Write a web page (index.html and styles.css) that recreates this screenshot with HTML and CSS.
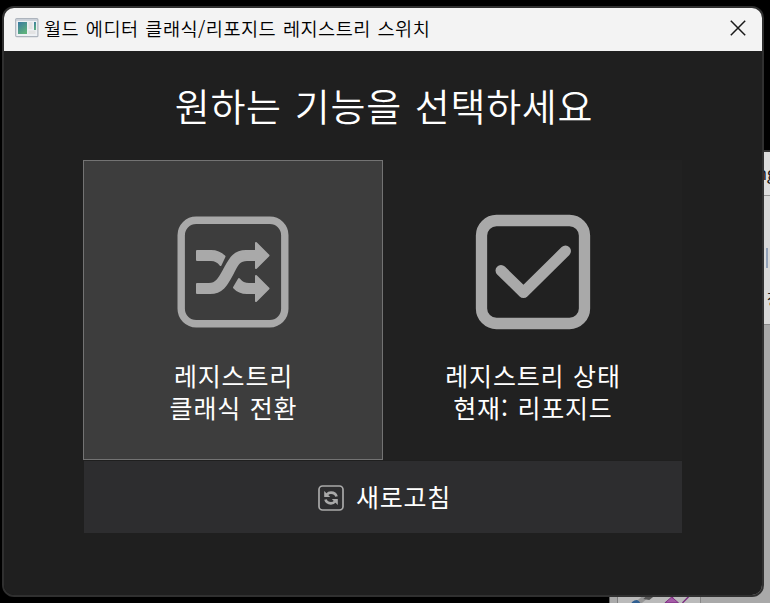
FILE: index.html
```html
<!DOCTYPE html>
<html lang="ko">
<head>
<meta charset="utf-8">
<title>월드 에디터 클래식/리포지드 레지스트리 스위치</title>
<link rel="stylesheet" href="styles.css">
</head>
<body>
<div class="desktop">
  <section class="back-window">
    <div class="back-title">ng</div>
    <div class="back-tools"><i class="back-mark"></i><span class="back-label">장</span></div>
    <div class="back-body">
      <svg class="back-art" width="84" height="9" viewBox="0 0 84 9">
        <circle cx="19" cy="12" r="6" fill="#315f91"/>
        <path d="M22 8L29 2" stroke="#969696" stroke-width="5"/>
        <path d="M26 5l5-5h9l-8 6z" fill="#555"/>
        <path d="M48 9l7-6 7 6z" fill="#a45aa6" stroke="#7c2e80"/>
        <path d="M55 4l4-4M66 9l9-9" stroke="#7c2e80" stroke-width="1.5"/>
      </svg>
    </div>
  </section>
  <main class="window">
    <header class="titlebar">
      <svg class="app-icon" width="24" height="20" viewBox="0 0 24 20">
        <defs><linearGradient id="screen" x1="0" y1="0" x2=".6" y2="1"><stop stop-color="#3979a2"/><stop offset="1" stop-color="#5eb17c"/></linearGradient></defs>
        <rect x=".7" y=".7" width="22.2" height="18" rx="1" fill="#eef1f4" stroke="#adb4bd" stroke-width="1.2"/>
        <path d="M1 2h21" stroke="#c3cad3" stroke-width="1.5"/>
        <path d="M3 4h9v12H3z" fill="url(#screen)"/>
        <path d="M13.5 4h4v7h-4zM13.5 12.5h7v3.5h-7z" fill="#e3e3e3"/>
        <path d="M19 4h2v8h-2z" fill="url(#screen)"/>
      </svg>
      <span class="title">월드 에디터 클래식/리포지드 레지스트리 스위치</span>
      <svg class="close" width="16" height="16" viewBox="0 0 16 16"><path d="M.8.8l14.4 14.4M15.2.8L.8 15.2" stroke="#191919" stroke-width="1.5"/></svg>
    </header>
    <div class="content">
      <h1 class="heading">원하는 기능을 선택하세요</h1>
      <div class="cards">
        <div class="card card-active">
          <svg class="card-icon" width="120" height="120" viewBox="0 0 120 120">
            <rect x="8.2" y="8.2" width="103.6" height="103.6" rx="15" fill="none" stroke="#a9a9a9" stroke-width="7.4"/>
            <g fill="#a9a9a9" stroke="#a9a9a9" stroke-width="2" stroke-linejoin="round">
              <path d="M24 39H38Q46 39 51.500 44.500L47.500 53Q44 48 38 48H24Z"/>
              <path d="M24 72H36C44 72 47 65 52 56C57 47 61 39 73 39H83V31L95.500 43.500L83 56V48H74C66 48 64 53 60 61C54 72 50 81 37 81H24Z"/>
              <path d="M66 67Q70 72 76 72H83V64L95.500 76.500L83 89V81H74Q66 81 61 75.500Z"/>
            </g>
          </svg>
          <div class="label">레지스트리<br>클래식 전환</div>
        </div>
        <div class="card">
          <svg class="card-icon" width="120" height="120" viewBox="0 0 120 120">
            <rect x="8.500" y="8.500" width="103" height="103" rx="15" fill="none" stroke="#a9a9a9" stroke-width="11.300"/>
            <path d="M28 58.500L50.500 80.500L92.500 39" fill="none" stroke="#a9a9a9" stroke-width="11" stroke-linecap="round" stroke-linejoin="round"/>
          </svg>
          <div class="label">레지스트리 상태<br>현재: 리포지드</div>
        </div>
      </div>
      <div class="refresh">
        <svg class="refresh-icon" width="26" height="26" viewBox="0 0 26 26">
          <rect x="1" y="1" width="24" height="24" rx="3.500" fill="none" stroke="#a9a9a9" stroke-width="1.700"/>
          <path d="M18.500 11.500Q17.500 7.700 13 7.700Q10.500 7.700 9 9.500M7.500 14.500Q8.500 18.300 13 18.300Q15.500 18.300 17 16.500" fill="none" stroke="#a9a9a9" stroke-width="2.700"/>
          <path d="M6.200 6V12H12.200ZM19.800 20V14H13.800Z" fill="#a9a9a9"/>
        </svg>
        <span class="label">새로고침</span>
      </div>
    </div>
  </main>
</div>
</body>
</html>
```

FILE: styles.css
```css
* { box-sizing: border-box; }
body { margin: 0; font-family: "Noto Sans CJK KR", sans-serif; }
.desktop { position: relative; width: 770px; height: 603px; overflow: hidden; background: #000; }

.back-window {
  position: absolute; left: 609px; top: 150px; width: 200px; height: 460px;
  display: flex; flex-direction: column;
  border-top: 2px solid #353535; border-left: 1px solid #666; background: #a9a9a9;
}
.back-title { height: 44px; padding: 9px 0 0 146px; font: 18px/24px "Open Sans", sans-serif; color: #171717; background: #dedede; border-bottom: 1px solid #999; }
.back-tools { height: 129px; padding: 52px 0 0 156px; background: #d9d9d9; border-bottom: 1px solid #8b8b8b; }
.back-mark { display: block; width: 2px; height: 20px; background: #93a2b8; }
.back-label { display: block; margin: 20px 0 0 1px; font-size: 16px; line-height: 20px; color: #202020; }
.back-body { flex: 1; padding: 269px 0 0 7px; }
.back-art { display: block; background: #bababa; border-left: 1px solid #808080; border-right: 1px solid #888; }

.window {
  position: absolute; left: 2px; top: 6px; width: 762px; height: 591px;
  overflow: hidden; border: 2px solid #303030; border-radius: 12px;
  background: #1f1f1f; background-clip: padding-box;
}
.titlebar { display: flex; align-items: center; height: 43px; padding: 0 16px 0 11px; background: #f3f3f3; }
.app-icon { margin-top: -3px; }
.title { margin: -4px 0 0 5px; font-size: 18.6px; font-weight: 350; letter-spacing: .48px; word-spacing: 1px; line-height: 24px; white-space: nowrap; color: #000; }
.close { margin-left: auto; margin-top: -3px; }

.content { display: flex; flex-direction: column; align-items: center; padding-top: 27px; }
.heading { margin: 0; height: 82px; padding-left: 2px; font-size: 38px; font-weight: 350; line-height: 54px; letter-spacing: .75px; word-spacing: 1.5px; white-space: nowrap; color: #fff; }
.cards { display: flex; width: 600px; height: 301px; }
.card { display: flex; flex-direction: column; align-items: center; width: 299px; height: 300px; padding-top: 52px; background: #212121; }
.card-active { width: 300px; padding-top: 51px; border: 1px solid #737373; background: #3d3d3d; }
.card-icon { flex: none; margin-bottom: 27px; }
.label { padding-left: 1px; font-size: 25px; line-height: 32px; letter-spacing: .8px; word-spacing: 1px; text-align: center; white-space: nowrap; color: #fff; }
.refresh { display: flex; align-items: center; justify-content: center; gap: 11px; width: 598px; height: 72px; padding: 0 0 2px 3px; background: #2d2d2f; }
.refresh-icon { margin-top: 3px; }
```
